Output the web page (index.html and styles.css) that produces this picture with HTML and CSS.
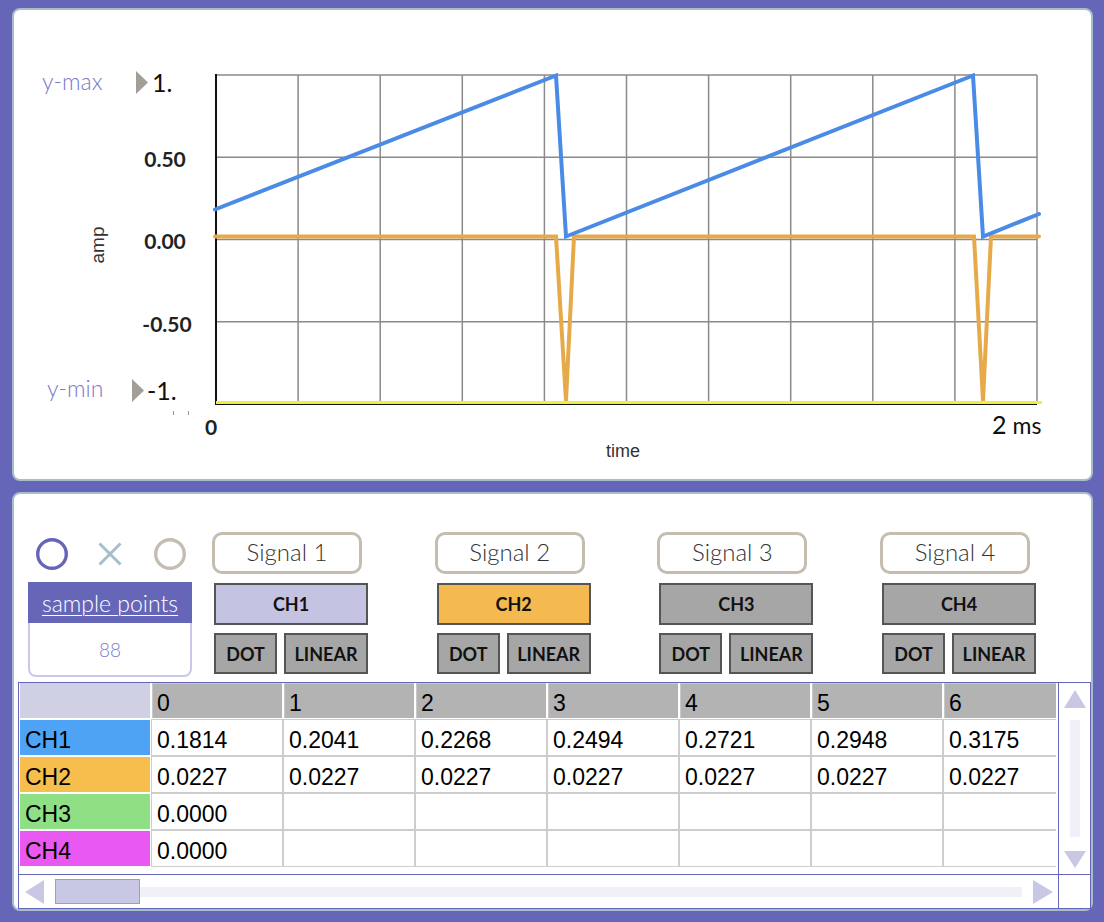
FILE: index.html
```html
<!DOCTYPE html>
<html>
<head>
<meta charset="utf-8">
<title>Signal scope</title>
<link rel="stylesheet" href="styles.css">
</head>
<body>
<div class="app">
  <section class="panel chart-panel">
    <svg class="chart" width="1077" height="469" viewBox="14 10 1077 469">
      <g class="grid">
        <line x1="298.1" y1="75" x2="298.1" y2="404"/>
        <line x1="380.2" y1="75" x2="380.2" y2="404"/>
        <line x1="462.3" y1="75" x2="462.3" y2="404"/>
        <line x1="544.4" y1="75" x2="544.4" y2="404"/>
        <line x1="626.5" y1="75" x2="626.5" y2="404"/>
        <line x1="708.6" y1="75" x2="708.6" y2="404"/>
        <line x1="790.7" y1="75" x2="790.7" y2="404"/>
        <line x1="872.8" y1="75" x2="872.8" y2="404"/>
        <line x1="954.9" y1="75" x2="954.9" y2="404"/>
        <line x1="1037" y1="75" x2="1037" y2="404"/>
        <line x1="216" y1="75" x2="1037" y2="75"/>
        <line x1="216" y1="157.25" x2="1037" y2="157.25"/>
        <line x1="216" y1="239.5" x2="1037" y2="239.5"/>
        <line x1="216" y1="321.75" x2="1037" y2="321.75"/>
      </g>
      <line class="axis" x1="216" y1="74" x2="216" y2="405"/>
      <line class="axis" x1="215" y1="404" x2="1037" y2="404"/>
      <polyline class="trace trace-yellow" points="216,402.5 1042,402.5"/>
      <polyline class="trace trace-orange" points="215,236.5 556,236.5 566,401 574,236.5 974,236.5 983,401 991,236.5 1039,236.5"/>
      <polyline class="trace trace-blue" points="215,209.5 556,75.5 566,236.5 973,75.5 983,236.5 1039,214"/>
      <line class="mini-tick" x1="173.5" y1="411" x2="173.5" y2="415"/>
      <line class="mini-tick" x1="188.5" y1="411" x2="188.5" y2="415"/>

      <text class="lim" x="42" y="90">y-max</text>
      <polygon class="lim-arrow" points="136,71 148,82.5 136,94"/>
      <text class="lim-val" x="152" y="92">1.</text>
      <text class="tick" x="165" y="167" text-anchor="middle">0.50</text>
      <text class="tick" x="165" y="249" text-anchor="middle">0.00</text>
      <text class="tick" x="167" y="332" text-anchor="middle">-0.50</text>
      <text class="lim" x="47" y="397">y-min</text>
      <polygon class="lim-arrow" points="132,379 144,390.5 132,402"/>
      <text class="lim-val" x="147" y="400">-1.</text>
      <text class="axis-title amp" transform="translate(104,245) rotate(-90)" text-anchor="middle">amp</text>
      <text class="tick" x="211" y="435" text-anchor="middle">0</text>
      <text class="x-end" x="992" y="434">2<tspan class="x-unit" dx="6">ms</tspan></text>
      <text class="axis-title" x="623" y="457" text-anchor="middle">time</text>
    </svg>
  </section>

  <section class="panel control-panel">
    <div class="controls">
      <div class="left-col">
        <div class="icons">
          <svg class="icon-ring" width="32" height="32" viewBox="0 0 32 32"><circle cx="16" cy="16" r="14.3" class="ring-purple"/></svg>
          <svg class="icon-x" width="24" height="24" viewBox="0 0 24 24"><path d="M1.5 1.5 L22.5 22.5 M22.5 1.5 L1.5 22.5" class="x-stroke"/></svg>
          <svg class="icon-ring ring-last" width="32" height="32" viewBox="0 0 32 32"><circle cx="16" cy="16" r="14.3" class="ring-beige"/></svg>
        </div>
        <div class="sample">
          <div class="sample-head"><span class="sample-link">sample points</span></div>
          <div class="sample-val">88</div>
        </div>
      </div>
      <div class="groups">
        <div class="group">
          <div class="signal">Signal 1</div>
          <div class="ch ch-1">CH1</div>
          <div class="modes"><div class="mode mode-dot">DOT</div><div class="mode mode-linear">LINEAR</div></div>
        </div>
        <div class="group">
          <div class="signal">Signal 2</div>
          <div class="ch ch-2">CH2</div>
          <div class="modes"><div class="mode mode-dot">DOT</div><div class="mode mode-linear">LINEAR</div></div>
        </div>
        <div class="group">
          <div class="signal">Signal 3</div>
          <div class="ch ch-off">CH3</div>
          <div class="modes"><div class="mode mode-dot">DOT</div><div class="mode mode-linear">LINEAR</div></div>
        </div>
        <div class="group">
          <div class="signal">Signal 4</div>
          <div class="ch ch-off">CH4</div>
          <div class="modes"><div class="mode mode-dot">DOT</div><div class="mode mode-linear">LINEAR</div></div>
        </div>
      </div>
    </div>

    <div class="table-frame">
      <div class="table-main">
        <div class="table-view">
          <div class="data-grid">
            <div class="cell corner"></div>
            <div class="cell hd">0</div><div class="cell hd">1</div><div class="cell hd">2</div><div class="cell hd">3</div><div class="cell hd">4</div><div class="cell hd">5</div><div class="cell hd">6</div>

            <div class="cell rh rh-1">CH1</div>
            <div class="cell dc">0.1814</div><div class="cell dc">0.2041</div><div class="cell dc">0.2268</div><div class="cell dc">0.2494</div><div class="cell dc">0.2721</div><div class="cell dc">0.2948</div><div class="cell dc">0.3175</div>

            <div class="cell rh rh-2">CH2</div>
            <div class="cell dc">0.0227</div><div class="cell dc">0.0227</div><div class="cell dc">0.0227</div><div class="cell dc">0.0227</div><div class="cell dc">0.0227</div><div class="cell dc">0.0227</div><div class="cell dc">0.0227</div>

            <div class="cell rh rh-3">CH3</div>
            <div class="cell dc">0.0000</div><div class="cell dc"></div><div class="cell dc"></div><div class="cell dc"></div><div class="cell dc"></div><div class="cell dc"></div><div class="cell dc"></div>

            <div class="cell rh rh-4">CH4</div>
            <div class="cell dc">0.0000</div><div class="cell dc"></div><div class="cell dc"></div><div class="cell dc"></div><div class="cell dc"></div><div class="cell dc"></div><div class="cell dc"></div>
          </div>
        </div>
      </div>
      <div class="vscroll">
        <svg class="arrow-up" width="22" height="18" viewBox="0 0 22 18"><polygon points="11,0 22,18 0,18"/></svg>
        <div class="vtrack"></div>
        <svg class="arrow-down" width="22" height="17" viewBox="0 0 22 17"><polygon points="0,0 22,0 11,17"/></svg>
      </div>
      <div class="hscroll">
        <svg class="arrow-left" width="19" height="24" viewBox="0 0 19 24"><polygon points="19,0 19,24 0,12"/></svg>
        <div class="htrack"><div class="hthumb"></div></div>
        <svg class="arrow-right" width="20" height="24" viewBox="0 0 20 24"><polygon points="0,0 20,12 0,24"/></svg>
      </div>
      <div class="corner-box"></div>
    </div>
  </section>
</div>
</body>
</html>
```

FILE: styles.css
```css
* { box-sizing: border-box; }
html, body { margin: 0; padding: 0; }
body {
  background: #6666b8;
  width: 1104px;
  height: 922px;
  overflow: hidden;
  font-family: Lato, "Liberation Sans", sans-serif;
}

.panel {
  background: #fff;
  border: 2px solid #a8bdca;
  border-radius: 8px;
  margin-left: 12px;
  width: 1081px;
}
.chart-panel { margin-top: 8px; height: 473px; }
.chart { display: block; }

.grid line { stroke: #8a8a8a; stroke-width: 1.5; }
.axis { stroke: #111; stroke-width: 2; }
.trace { fill: none; stroke-linejoin: miter; stroke-linecap: round; }
.trace-blue { stroke: #4a8be6; stroke-width: 4; }
.trace-orange { stroke: #e6aa4a; stroke-width: 4; }
.trace-yellow { stroke: #eef03c; stroke-width: 3; stroke-linecap: butt; }
.mini-tick { stroke: #999; stroke-width: 1; }

.lim { font-family: Lato, sans-serif; font-weight: 300; font-size: 23px; fill: #7878cc; }
.lim-arrow { fill: #a39f96; }
.lim-val { font-family: Lato, sans-serif; font-weight: 400; font-size: 25px; fill: #111; }
.tick { font-family: Lato, sans-serif; font-weight: 700; font-size: 21px; fill: #222; }
.axis-title { font-family: "Liberation Sans", Arial, sans-serif; font-size: 18px; fill: #333; }
.amp { font-size: 19px; }
.x-end { font-family: Lato, sans-serif; font-size: 25px; fill: #111; }
.x-unit { font-size: 23px; }

/* controls */
.control-panel { margin-top: 11px; height: 419px; padding-top: 38px; }
.controls { display: flex; padding-left: 14px; height: 145px; }
.left-col { width: 164px; padding-top: 6px; }
.icons { display: flex; align-items: center; height: 32px; padding-left: 8px; }
.icon-x { margin-left: 30px; }
.ring-last { margin-left: 32px; }
.ring-purple { fill: none; stroke: #6666b8; stroke-width: 3.4; }
.ring-beige { fill: none; stroke: #c4bdb0; stroke-width: 3.4; }
.x-stroke { stroke: #a3bfcc; stroke-width: 3; fill: none; }

.sample { margin-top: 12px; width: 164px; }
.sample-head {
  background: #6666b8;
  height: 41px;
  display: flex; align-items: center; justify-content: center;
}
.sample-link {
  color: #fff; font-weight: 300; font-size: 23px; text-decoration: underline;
  text-underline-offset: 3px; text-decoration-thickness: 1px;
}
.sample-val {
  height: 54px;
  border: 2px solid #c8c8e8; border-top: none;
  border-radius: 0 0 8px 8px;
  display: flex; align-items: center; justify-content: center;
  color: #7878cc; font-weight: 300; font-size: 19px;
}

.groups { display: flex; margin-left: 22px; gap: 68.7px; }
.group { width: 154px; display: flex; flex-direction: column; }
.signal {
  width: 150px; height: 42px; margin-left: -2px;
  border: 3px solid #c4bdb0; border-radius: 10px;
  display: flex; align-items: center; justify-content: center;
  padding-bottom: 3px;
  font-weight: 300; font-size: 24px; color: #333;
}
.ch {
  margin-top: 9px; height: 42px;
  border: 2px solid #555;
  display: flex; align-items: center; justify-content: center;
  font-weight: 700; font-size: 18px; color: #111;
}
.ch-1 { background: #c4c4e2; }
.ch-2 { background: #f4b94f; }
.ch-off { background: #a6a6a6; }
.modes { display: flex; gap: 7px; margin-top: 8px; }
.mode {
  height: 41px; border: 2px solid #555; background: #a6a6a6;
  display: flex; align-items: center; justify-content: center;
  font-weight: 700; font-size: 18px; color: #111;
}
.mode-dot { width: 63px; }
.mode-linear { width: 84px; }

/* table */
.table-frame {
  margin-top: 5px; margin-left: 4px;
  width: 1073px; height: 227px;
  border: 1px solid #6666b8;
  background: #6666b8;
  display: grid;
  grid-template-columns: 1fr 31px;
  grid-template-rows: 191px 1fr;
  gap: 1px;
}
.table-main { background: #fff; overflow: hidden; }
.table-view { margin-left: 1px; width: 1036px; height: 191px; overflow: hidden; }
.data-grid {
  display: grid;
  grid-template-columns: repeat(8, 130px);
  grid-template-rows: 35px repeat(4, 35px);
  gap: 2px;
  width: 1054px;
  font-family: "Liberation Sans", Arial, sans-serif;
  font-size: 23px;
  color: #000;
}
.cell { display: flex; align-items: center; padding-left: 5px; padding-top: 5px; white-space: nowrap; }
.corner { background: #cfd0e4; }
.hd { background: #b3b3b3; box-shadow: inset 1px 1px 0 #c9c9c9; }
.dc { background: #fff; box-shadow: 0 0 0 1px #cdcdcd; }
.rh-1 { background: #4ea3f5; }
.rh-2 { background: #f5be4d; }
.rh-3 { background: #8fe085; }
.rh-4 { background: #ea58f2; }

.vscroll {
  background: #fff;
  display: flex; flex-direction: column; align-items: center;
  padding-top: 7px;
}
.vscroll svg polygon, .hscroll svg polygon { fill: #c8c8e4; }
.vtrack { width: 10px; height: 117px; margin-top: 12px; background: #f0f0f8; }
.arrow-down { margin-top: 14px; }

.hscroll { background: #fff; display: flex; align-items: center; padding-left: 6px; }
.htrack { position: relative; width: 967px; height: 25px; margin-left: 11px; display: flex; align-items: center; }
.htrack::before { content: ""; display: block; width: 100%; height: 10px; background: #f0f0f8; }
.hthumb {
  position: absolute; left: 0; top: 0;
  width: 85px; height: 25px;
  background: #c8c8e4; border: 1px solid #9b9bd0;
}
.arrow-right { margin-left: 11px; }
.corner-box { background: #fff; }
```
